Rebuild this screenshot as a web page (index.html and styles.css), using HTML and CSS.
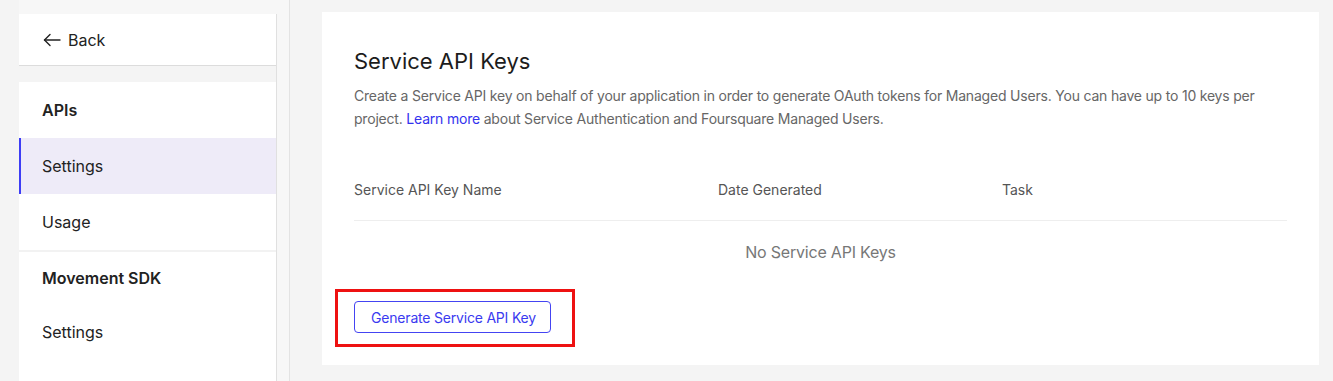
FILE: index.html
```html
<!DOCTYPE html>
<html lang="en">
<head>
    <meta charset="UTF-8">
    <meta name="viewport" content="width=device-width, initial-scale=1.0">
    <title>Service API Keys</title>
    <link rel="stylesheet" href="styles.css">
</head>
<body>
    <div class="layout">
        <aside class="sidebar">
            <nav class="nav">
                <a class="back-row" href="#">
                    <svg class="back-icon" width="18" height="14" viewBox="0 0 18 14" fill="none" stroke="#222" stroke-width="1.4" stroke-linecap="round" stroke-linejoin="round">
                        <path d="M17 7H1.5"/>
                        <path d="M7 1.5L1.5 7L7 12.5"/>
                    </svg>
                    Back
                </a>
                <div class="nav-gap"></div>
                <div class="nav-group">
                    <div class="nav-heading">APIs</div>
                    <a class="nav-item active" href="#">Settings</a>
                    <a class="nav-item divided" href="#">Usage</a>
                    <div class="nav-heading compact">Movement SDK</div>
                    <a class="nav-item" href="#">Settings</a>
                </div>
            </nav>
        </aside>

        <main class="main">
            <section class="card">
                <h1>Service API Keys</h1>
                <p class="intro">Create a Service API key on behalf of your application in order to generate OAuth tokens for Managed Users. You can have up to 10 keys per project. <a href="#">Learn more</a> about Service Authentication and Foursquare Managed Users.</p>

                <div class="keys-table">
                    <div class="keys-head">
                        <span class="col-name">Service API Key Name</span>
                        <span class="col-date">Date Generated</span>
                        <span class="col-task">Task</span>
                    </div>
                    <div class="keys-empty">No Service API Keys</div>
                </div>

                <span class="highlight">
                    <button class="btn-outline">Generate Service API Key</button>
                </span>
            </section>
        </main>
    </div>
</body>
</html>
```

FILE: styles.css
```css
body {
    margin: 0;
    padding: 0;
    background-color: #f4f4f4;
    font-family: Inter, "Noto Sans", sans-serif;
    color: #222;
}
a {
    text-decoration: none;
    color: inherit;
}
.layout {
    display: flex;
    min-height: 100vh;
    padding-left: 19px;
}
.sidebar {
    width: 271px;
    padding-top: 14px;
    background: #f7f7f7;
    border-right: 1px solid #e3e3e3;
    display: flex;
    flex-direction: column;
    box-sizing: border-box;
}
.nav {
    width: 258px;
    flex: 1;
    display: flex;
    flex-direction: column;
    border-right: 1px solid #e0e0e0;
    box-sizing: border-box;
}
.back-row {
    display: flex;
    align-items: center;
    gap: 7px;
    height: 51px;
    padding-left: 24px;
    background: #fff;
    border-bottom: 1px solid #dcdcdc;
    font-size: 16px;
}
.nav-gap {
    height: 16px;
    background: #f4f4f4;
}
.nav-group {
    flex: 1;
    background: #fff;
}
.nav-heading,
.nav-item {
    display: flex;
    align-items: center;
    height: 56px;
    padding-left: 23px;
    font-size: 16px;
}
.nav-heading {
    font-weight: 600;
}
.nav-heading.compact {
    height: 52px;
}
.nav-item.active {
    background: #eeebf8;
    border-left: 2px solid #3d3df5;
    padding-left: 21px;
}
.nav-item.divided {
    border-bottom: 2px solid #f2f2f2;
}
.main {
    flex: 1;
    padding: 12px 14px 0 32px;
}
.card {
    background: #fff;
    padding: 35px 32px 32px;
}
h1 {
    margin: 0 0 9px;
    font-size: 22px;
    font-weight: 400;
    line-height: 28px;
    color: #1c1c1c;
}
.intro {
    margin: 0;
    font-size: 14px;
    line-height: 23px;
    letter-spacing: -0.2px;
    color: #666;
}
.intro a {
    color: #3333ee;
}
.keys-table {
    margin-top: 50px;
}
.keys-head {
    display: grid;
    grid-template-columns: 364px 284px 1fr;
    height: 40px;
    align-items: start;
    border-bottom: 1px solid #eeeeee;
    font-size: 14px;
    color: #555;
    line-height: 20px;
}
.keys-empty {
    height: 61px;
    display: flex;
    align-items: center;
    justify-content: center;
    font-size: 16px;
    letter-spacing: -0.2px;
    color: #777;
}
.highlight {
    position: relative;
    display: inline-block;
    margin-top: 19px;
}
.highlight::after {
    content: "";
    position: absolute;
    left: -19px;
    right: -24px;
    top: -12px;
    bottom: -14px;
    border: 3px solid #ee1111;
    pointer-events: none;
}
.btn-outline {
    display: block;
    width: 197px;
    height: 32px;
    padding: 0 0 0 2px;
    background: #fff;
    border: 1px solid #4444f2;
    border-radius: 4px;
    color: #3a3af0;
    font-family: inherit;
    font-size: 14px;
    letter-spacing: -0.2px;
    cursor: pointer;
}
```
